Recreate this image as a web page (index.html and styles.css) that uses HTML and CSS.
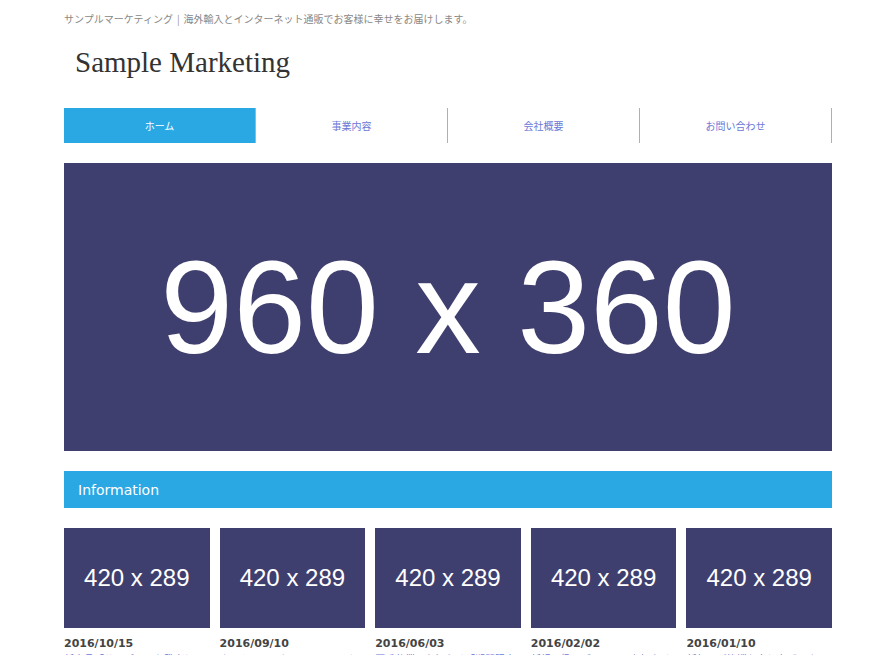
FILE: index.html
```html
<!DOCTYPE html>
<html lang="ja">
<head>
<meta charset="utf-8">
<title>Sample Marketing</title>
<link rel="stylesheet" href="styles.css">
</head>
<body>
<div class="page">
  <header class="header">
    <p class="tagline">サンプルマーケティング<span class="sep">|</span>海外輸入とインターネット通販でお客様に幸せをお届けします。</p>
    <h1 class="logo">Sample Marketing</h1>
  </header>
  <nav class="nav">
    <a class="nav-item active" href="#">ホーム</a>
    <a class="nav-item" href="#">事業内容</a>
    <a class="nav-item" href="#">会社概要</a>
    <a class="nav-item" href="#">お問い合わせ</a>
  </nav>
  <div class="hero">960 x 360</div>
  <h2 class="section-title">Information</h2>
  <div class="cards">
    <div class="card">
      <div class="thumb">420 x 289</div>
      <p class="date">2016/10/15</p>
      <a class="card-link" href="#">新商品「サンプル」を発売しました</a>
    </div>
    <div class="card">
      <div class="thumb">420 x 289</div>
      <p class="date">2016/09/10</p>
      <a class="card-link" href="#">ホームページをリニューアルしました</a>
    </div>
    <div class="card">
      <div class="thumb">420 x 289</div>
      <p class="date">2016/06/03</p>
      <a class="card-link" href="#">夏季休業のお知らせ「期間限定」</a>
    </div>
    <div class="card">
      <div class="thumb">420 x 289</div>
      <p class="date">2016/02/02</p>
      <a class="card-link" href="#">新規取扱いブランドのお知らせ</a>
    </div>
    <div class="card">
      <div class="thumb">420 x 289</div>
      <p class="date">2016/01/10</p>
      <a class="card-link" href="#">新年のご挨拶を申し上げます</a>
    </div>
  </div>
</div>
</body>
</html>
```
FILE: styles.css
```css
html, body {
  margin: 0;
  padding: 0;
  background: #fff;
}
body {
  font-family: "DejaVu Sans", "Noto Sans CJK JP", sans-serif;
  color: #444;
}
.page {
  width: 768px;
  margin-left: 64px;
}
.header {
  display: flex;
  flex-direction: column;
}
.tagline {
  margin: 12px 0 0;
  font-family: "Noto Sans CJK JP", sans-serif;
  font-size: 10px;
  line-height: 14px;
  color: #888;
}
.sep {
  margin: 0 4px;
  color: #999;
}
.logo {
  margin: 19px 0 0 11px;
  font-family: "Liberation Serif", "DejaVu Serif", serif;
  font-weight: normal;
  font-size: 29px;
  line-height: 34px;
  color: #333;
}
.nav {
  display: flex;
  margin-top: 29px;
  height: 35px;
}
.nav-item {
  flex: 1;
  display: flex;
  align-items: center;
  justify-content: center;
  border-right: 1px solid #6cc6ee;
  font-family: "Noto Sans CJK JP", sans-serif;
  font-size: 10px;
  color: #6a78d6;
  text-decoration: none;
}
.nav-item.active {
  background: #29a8e3;
  color: #fff;
}
.hero {
  margin-top: 20px;
  height: 288px;
  background: #3f3f6f;
  color: #fff;
  display: flex;
  align-items: center;
  justify-content: center;
  font-family: "Liberation Sans", Arial, sans-serif;
  font-size: 131px;
}
.section-title {
  margin: 20px 0 0;
  height: 37px;
  background: #29a8e3;
  color: #fff;
  font-weight: normal;
  font-size: 14px;
  display: flex;
  align-items: center;
  padding-left: 14px;
}
.cards {
  margin-top: 20px;
  display: grid;
  grid-template-columns: repeat(5, 1fr);
  gap: 10px;
}
.card {
  display: flex;
  flex-direction: column;
}
.thumb {
  height: 100px;
  background: #3f3f6f;
  color: #fff;
  display: flex;
  align-items: center;
  justify-content: center;
  font-family: "Liberation Sans", Arial, sans-serif;
  font-size: 24px;
}
.date {
  margin: 9px 0 0;
  font-size: 11px;
  font-weight: bold;
  line-height: 14px;
  color: #444;
}
.card-link {
  margin-top: 1px;
  font-family: "Noto Sans CJK JP", sans-serif;
  font-size: 10px;
  line-height: 14px;
  color: #6a78d6;
  text-decoration: none;
}
```
